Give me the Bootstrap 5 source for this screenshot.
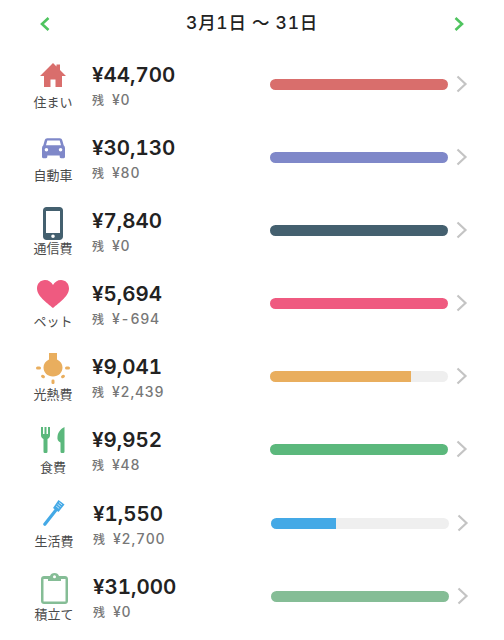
<!DOCTYPE html>
<html lang="ja">
<head>
<meta charset="utf-8">
<title>予算</title>
<link href="https://cdn.jsdelivr.net/npm/bootstrap@5.3.0/dist/css/bootstrap.min.css" rel="stylesheet">
<style>
html,body{height:640px;overflow:hidden;background:#fff}
body{font-family:Inter,"Noto Sans CJK JP",sans-serif;color:#222;margin:0;font-variant-numeric:tabular-nums}
.top-bar{height:48px;padding:0 39px 1px 39px}
.top-title{font-size:17.5px;font-weight:500;letter-spacing:.7px;color:#222}
.budget-row{height:73.1px;padding-left:26px;padding-right:36px}
.budget-row.nudge{padding-left:27px;padding-right:35px}
.icon-col{width:54px;margin-top:13px}
.icon-box{height:28px}
.cat-label{font-size:13px;line-height:16px;color:#4a4a4a;margin-top:5px;white-space:nowrap}
.amt-col{width:190px;padding-left:12px;margin-top:14px}
.amt{font-size:20.5px;font-weight:600;line-height:26px;color:#222}
.rest{font-size:14px;line-height:18px;color:#777;margin-top:3px;font-weight:500;letter-spacing:.75px}
.rest-k{font-size:12px;margin-right:8px;letter-spacing:0}
.bar-track{height:11px;width:178px;border-radius:6px;background:#efefef;margin-top:31px}
.chev{margin-left:8px;margin-top:27px}
.c-home{background:#d96e6c}.c-car{background:#7f88c9}.c-phone{background:#44606f}.c-pet{background:#ef5a80}
.c-light{background:#e9ae5e}.c-food{background:#5bb87c}.c-life{background:#44a9e6}.c-save{background:#85bd96}
</style>
</head>
<body>
<div class="d-flex align-items-center justify-content-between top-bar">
<svg width="12" height="16" viewBox="0 0 12 16"><path d="M9.5 2 3 8l6.5 6" fill="none" stroke="#4fc45f" stroke-width="2.6"/></svg>
<div class="top-title">3月1日 〜 31日</div>
<svg width="12" height="16" viewBox="0 0 12 16"><path d="M2.5 2 9 8l-6.5 6" fill="none" stroke="#4fc45f" stroke-width="2.6"/></svg>
</div>

<div class="d-flex budget-row">
<div class="icon-col text-center">
<div class="icon-box"><svg width="28" height="28" viewBox="0 0 28 28"><path fill="#d96e6c" d="M14 2 17.5 5.500V3.500H21V9L27 15H23V26H16.500V18.500H11.500V26H5V15H1Z"/></svg></div>
<div class="cat-label">住まい</div>
</div>
<div class="amt-col"><div class="amt">¥44,700</div><div class="rest"><span class="rest-k">残</span>¥0</div></div>
<div class="bar-track overflow-hidden"><div class="h-100 c-home" style="width:100%"></div></div>
<svg class="chev" width="12" height="18" viewBox="0 0 12 18"><path d="M1.500 1.500 9.500 9l-8 7.500" fill="none" stroke="#c4c4c4" stroke-width="2.200"/></svg>
</div>

<div class="d-flex budget-row">
<div class="icon-col text-center">
<div class="icon-box"><svg width="23" height="28" viewBox="0 0 26 28"><path fill="#7f88c9" d="M6 3H20C21.500 3 22.500 4 23 5.500L24.500 11C25.500 12 26 13 26 14V24C26 25 25.500 25.500 24.500 25.500H21.500C20.500 25.500 20 25 20 24V22.500H6V24C6 25 5.500 25.500 4.500 25.500H1.500C.5 25.500 0 25 0 24V14C0 13 .5 12 1.500 11L3 5.500C3.500 4 4.500 3 6 3ZM6 5.500 4.500 11H21.500L20 5.500Z"/><circle cx="5" cy="16" r="2" fill="#fff"/><circle cx="21" cy="16" r="2" fill="#fff"/></svg></div>
<div class="cat-label">自動車</div>
</div>
<div class="amt-col"><div class="amt">¥30,130</div><div class="rest"><span class="rest-k">残</span>¥80</div></div>
<div class="bar-track overflow-hidden"><div class="h-100 c-car" style="width:100%"></div></div>
<svg class="chev" width="12" height="18" viewBox="0 0 12 18"><path d="M1.500 1.500 9.500 9l-8 7.500" fill="none" stroke="#c4c4c4" stroke-width="2.200"/></svg>
</div>

<div class="d-flex budget-row">
<div class="icon-col text-center">
<div class="icon-box"><svg width="20" height="33" viewBox="0 0 20 33"><path fill="#44606f" fill-rule="evenodd" d="M3.500 0H16.500C18.500 0 20 1.500 20 3.500V29.500C20 31.500 18.500 33 16.500 33H3.500C1.500 33 0 31.500 0 29.500V3.500C0 1.500 1.500 0 3.500 0ZM3 4V26H17V4ZM10 27.500A1.800 1.800 0 1 0 10 31.100 1.800 1.800 0 1 0 10 27.500Z"/></svg></div>
<div class="cat-label">通信費</div>
</div>
<div class="amt-col"><div class="amt">¥7,840</div><div class="rest"><span class="rest-k">残</span>¥0</div></div>
<div class="bar-track overflow-hidden"><div class="h-100 c-phone" style="width:100%"></div></div>
<svg class="chev" width="12" height="18" viewBox="0 0 12 18"><path d="M1.500 1.500 9.500 9l-8 7.500" fill="none" stroke="#c4c4c4" stroke-width="2.200"/></svg>
</div>

<div class="d-flex budget-row">
<div class="icon-col text-center">
<div class="icon-box"><svg width="32" height="28" viewBox="0 0 32 28"><path fill="#ef5a80" d="M16 28C13 25 0 17 0 8.500 0 3.500 3.500 0 8 0 11.500 0 14.500 2 16 5 17.500 2 20.500 0 24 0 28.500 0 32 3.500 32 8.500 32 17 19 25 16 28Z"/></svg></div>
<div class="cat-label">ペット</div>
</div>
<div class="amt-col"><div class="amt">¥5,694</div><div class="rest"><span class="rest-k">残</span>¥-694</div></div>
<div class="bar-track overflow-hidden"><div class="h-100 c-pet" style="width:100%"></div></div>
<svg class="chev" width="12" height="18" viewBox="0 0 12 18"><path d="M1.500 1.500 9.500 9l-8 7.500" fill="none" stroke="#c4c4c4" stroke-width="2.200"/></svg>
</div>

<div class="d-flex budget-row">
<div class="icon-col text-center">
<div class="icon-box"><svg width="34" height="31" viewBox="0 0 34 31"><g fill="#e9ae5e"><path d="M13 0H21V6.500C24.500 8 26.500 11 26.500 14.500 26.500 19.500 22.500 23.500 17 23.500 11.500 23.500 7.500 19.500 7.500 14.500 7.500 11 9.500 8 13 6.500Z"/><rect x="0" y="13.500" width="5" height="3" rx="1.500"/><rect x="29" y="13.500" width="5" height="3" rx="1.500"/><rect x="15.500" y="26.500" width="3" height="4.500" rx="1.200"/><rect x="5" y="22" width="4" height="3" rx="1.500" transform="rotate(35 7 23.500)"/><rect x="25" y="22" width="4" height="3" rx="1.500" transform="rotate(-35 27 23.500)"/></g></svg></div>
<div class="cat-label">光熱費</div>
</div>
<div class="amt-col"><div class="amt">¥9,041</div><div class="rest"><span class="rest-k">残</span>¥2,439</div></div>
<div class="bar-track overflow-hidden"><div class="h-100 c-light" style="width:79%"></div></div>
<svg class="chev" width="12" height="18" viewBox="0 0 12 18"><path d="M1.500 1.500 9.500 9l-8 7.500" fill="none" stroke="#c4c4c4" stroke-width="2.200"/></svg>
</div>

<div class="d-flex budget-row">
<div class="icon-col text-center">
<div class="icon-box"><svg width="24" height="26" viewBox="0 0 24 26"><g fill="#5bb87c"><path d="M0 0H2V7H3.500V0H5.500V7H7V0H9V8.500C9 10.500 7.500 11.500 6.500 12V24.500C6.500 25.500 6 26 4.500 26 3 26 2.500 25.500 2.500 24.500V12C1.500 11.500 0 10.500 0 8.500Z"/><path d="M23.500 0V24.500C23.500 25.500 23 26 21.500 26 20 26 19.500 25.500 19.500 24.500V15.500C17 14.500 16 12.500 16.500 9.500 17 5 20 1.500 23.500 0Z"/></g></svg></div>
<div class="cat-label">食費</div>
</div>
<div class="amt-col"><div class="amt">¥9,952</div><div class="rest"><span class="rest-k">残</span>¥48</div></div>
<div class="bar-track overflow-hidden"><div class="h-100 c-food" style="width:100%"></div></div>
<svg class="chev" width="12" height="18" viewBox="0 0 12 18"><path d="M1.500 1.500 9.500 9l-8 7.500" fill="none" stroke="#c4c4c4" stroke-width="2.200"/></svg>
</div>

<div class="d-flex budget-row nudge">
<div class="icon-col text-center">
<div class="icon-box"><svg width="22" height="26" viewBox="0 0 22 26"><path d="M1.800 24.200 13 10" stroke="#44a9e6" stroke-width="3.200" stroke-linecap="round" fill="none"/><path fill="#44a9e6" d="M15.500 0 21.500 4.500 15.500 12 10 8Z"/><path d="M16 2.500 19 4.800M14.600 4.300 17.600 6.600M13.200 6.100 16.200 8.400" stroke="#d5ecfa" stroke-width=".9" fill="none"/></svg></div>
<div class="cat-label">生活費</div>
</div>
<div class="amt-col"><div class="amt">¥1,550</div><div class="rest"><span class="rest-k">残</span>¥2,700</div></div>
<div class="bar-track overflow-hidden"><div class="h-100 c-life" style="width:36.500%"></div></div>
<svg class="chev" width="12" height="18" viewBox="0 0 12 18"><path d="M1.500 1.500 9.500 9l-8 7.500" fill="none" stroke="#c4c4c4" stroke-width="2.200"/></svg>
</div>

<div class="d-flex budget-row nudge">
<div class="icon-col text-center">
<div class="icon-box"><svg width="27" height="31" viewBox="0 0 27 31"><path fill="#85bd96" fill-rule="evenodd" d="M3 3H9C9.500 1 11.300 0 13.500 0 15.700 0 17.500 1 18 3H24C25.700 3 27 4.300 27 6V28C27 29.700 25.700 31 24 31H3C1.300 31 0 29.700 0 28V6C0 4.300 1.300 3 3 3ZM2.500 6V28.500H24.500V6H20V8H7V6ZM13.500 2.200A1.500 1.500 0 1 0 13.500 5.200 1.500 1.500 0 1 0 13.500 2.200Z"/></svg></div>
<div class="cat-label">積立て</div>
</div>
<div class="amt-col"><div class="amt">¥31,000</div><div class="rest"><span class="rest-k">残</span>¥0</div></div>
<div class="bar-track overflow-hidden"><div class="h-100 c-save" style="width:100%"></div></div>
<svg class="chev" width="12" height="18" viewBox="0 0 12 18"><path d="M1.500 1.500 9.500 9l-8 7.500" fill="none" stroke="#c4c4c4" stroke-width="2.200"/></svg>
</div>

<script src="https://cdn.jsdelivr.net/npm/bootstrap@5.3.0/dist/js/bootstrap.bundle.min.js"></script>
</body>
</html>
